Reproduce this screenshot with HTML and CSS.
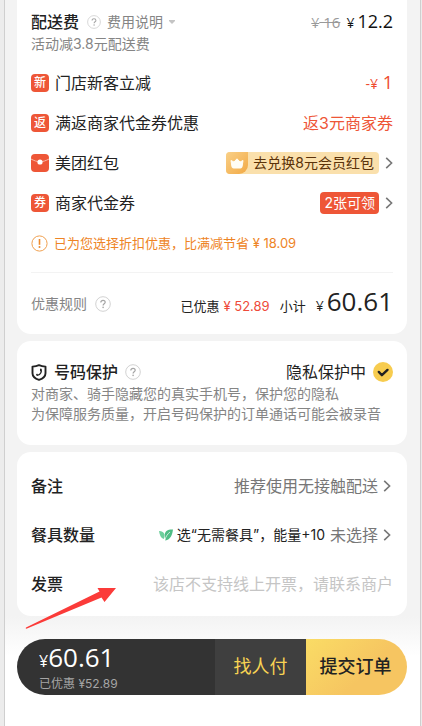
FILE: index.html
```html
<!DOCTYPE html>
<html lang="zh-CN">
<head>
<meta charset="utf-8">
<meta name="viewport" content="width=device-width, initial-scale=1">
<title>提交订单</title>
<link rel="stylesheet" href="styles.css">
</head>
<body>
<svg class="defs" aria-hidden="true">
  <symbol id="chevron" viewBox="0 0 8 14"><path d="M1.2 1.8 6.6 7l-5.4 5.2" fill="none" stroke="currentColor" stroke-width="1.6"/></symbol>
  <symbol id="help" viewBox="0 0 16 16"><circle cx="8" cy="8" r="7.3" fill="none" stroke="#d2d2d2"/><path d="M5.8 6.4C5.8 5 6.700 4.300 8 4.300s2.200.8 2.200 1.900c0 1.500-2.100 1.600-2.100 3.200" fill="none" stroke="#a5a5a5" stroke-width="1.200"/><circle cx="8.100" cy="11.400" r=".8" fill="#a5a5a5"/></symbol>
</svg>
<div class="phone">
  <main class="content">
    <section class="card fees">
      <div class="row fee-row">
        <div class="side"><span class="title">配送费</span>
          <button class="hint" type="button"><svg class="help help-small" aria-hidden="true"><use href="#help"/></svg>费用说明<svg class="caret" viewBox="0 0 6 4" aria-hidden="true"><path d="M0 0h6v1L3 4 0 1z" fill="#c4c4c4"/></svg></button>
        </div>
        <div class="price"><del><small>¥</small> 16</del><span class="now"><small>¥</small>12.2</span></div>
      </div>
      <p class="note">活动减3.8元配送费</p>
      <div class="row offer">
        <div class="side"><span class="badge">新</span><span>门店新客立减</span></div>
        <span class="minus"><small>-¥</small> 1</span>
      </div>
      <div class="row offer">
        <div class="side"><span class="badge">返</span><span>满返商家代金券优惠</span></div>
        <span class="red">返3元商家券</span>
      </div>
      <div class="row offer">
        <div class="side"><svg class="packet" viewBox="0 0 18 18" aria-hidden="true"><rect width="18" height="18" rx="4" fill="#ee5637"/><path d="M0 5c3 1.700 6 2.700 9 2.700S15 6.700 18 5" fill="none" stroke="#f8b9a8" stroke-width="1"/><circle cx="9" cy="8" r="2.600" fill="#fff"/></svg><span>美团红包</span></div>
        <button class="link" type="button"><span class="vip"><span class="crown"><svg viewBox="0 0 14 11" aria-hidden="true"><path d="M1 2.500 4 4 7 .8 10 4l3-1.500-.9 6Q12 10 10.500 10h-7Q2 10 1.900 8.500z" fill="#fffdf5" stroke="#fffdf5" stroke-width="1" stroke-linejoin="round"/></svg></span><span class="vip-text">去兑换8元会员红包</span></span><svg class="chevron" aria-hidden="true"><use href="#chevron"/></svg></button>
      </div>
      <div class="row offer">
        <div class="side"><span class="badge">券</span><span>商家代金券</span></div>
        <button class="link" type="button"><span class="tag">2张可领</span><svg class="chevron" aria-hidden="true"><use href="#chevron"/></svg></button>
      </div>
      <p class="notice"><svg viewBox="0 0 17 17" aria-hidden="true"><circle cx="8.500" cy="8.500" r="7.600" fill="none" stroke="#f0a050"/><path d="M8.500 4v5.800" stroke="#ee8a2c" stroke-width="1.600"/><circle cx="8.500" cy="12" r="1" fill="#ee8a2c"/></svg><span>已为您选择折扣优惠，比满减节省 ¥ 18.09</span></p>
      <div class="row summary">
        <button class="hint rules" type="button">优惠规则<svg class="help" aria-hidden="true"><use href="#help"/></svg></button>
        <div class="totals"><span>已优惠<span class="saved">¥ 52.89</span></span><span>小计</span><span class="total"><small>¥</small>60.61</span></div>
      </div>
    </section>

    <section class="card privacy">
      <div class="row privacy-row">
        <div class="side"><svg class="shield" viewBox="0 0 16 17" aria-hidden="true"><path d="M8 1.200C6 2.100 4 2.500 1.500 2.600v6.600c0 3.400 2.700 5.400 6.500 6.600 3.800-1.200 6.500-3.200 6.500-6.600V2.600C12 2.500 10 2.100 8 1.200z" fill="none" stroke="#222" stroke-width="1.900" stroke-linejoin="round"/><path d="M9.700 4.800c1.400 2.600.3 5.800-3.500 6.500" fill="none" stroke="#222" stroke-width="1.300"/><path d="M9 4.600l1.700 1-.7 1.700-1-.3zM5 10l1.500-.2.500 1.700-1.300.5z" fill="#222"/></svg><span class="title">号码保护</span><button class="hint" type="button" aria-label="号码保护说明"><svg class="help" aria-hidden="true"><use href="#help"/></svg></button></div>
        <label class="protect" for="protect"><span>隐私保护中</span><span class="check"><input id="protect" type="checkbox" checked><svg viewBox="0 0 20 20" aria-hidden="true"><path d="m5.800 9.900 3.100 3.300 5.600-5.300" fill="none" stroke="#222" stroke-width="2.400" stroke-linecap="round" stroke-linejoin="round"/></svg></span></label>
      </div>
      <p class="note">对商家、骑手隐藏您的真实手机号，保护您的隐私<br>为保障服务质量，开启号码保护的订单通话可能会被录音</p>
    </section>

    <section class="card options">
      <div class="row option"><span class="title">备注</span><button class="link muted" type="button">推荐使用无接触配送<svg class="chevron" aria-hidden="true"><use href="#chevron"/></svg></button></div>
      <div class="row option"><span class="title">餐具数量</span>
        <button class="link muted" type="button"><span class="eco"><svg viewBox="0 0 14 12" aria-hidden="true"><path d="M0 2c3 .1 5 1.300 5.400 3.500.2 1.500-.2 3.300-.6 4.500C1.800 9 .6 6 0 2z" fill="#6ecf9c"/><path d="M14 .5C9 .2 6 2 5.700 5.500c-.1 2 .2 4 .6 6C11.500 10.500 13.200 6 14 .5z" fill="#4fbd85"/><path d="M5.900 11C6.800 7.500 8.500 5 11 3" fill="none" stroke="#fff" stroke-width=".7"/></svg>选“无需餐具”，能量+10</span>未选择<svg class="chevron" aria-hidden="true"><use href="#chevron"/></svg></button></div>
      <div class="row option"><span class="title">发票</span><span class="disabled">该店不支持线上开票，请联系商户</span></div>
      <svg class="arrow" viewBox="0 0 92 42" aria-hidden="true"><path d="M91 1 72.500 1l2 3.500L1 40.500Q0 42 2 41.500L76.500 10.500l3 4.500z" fill="#fb3b39"/></svg>
    </section>
  </main>

  <footer class="footer">
    <div class="bar">
      <div class="amount"><div class="sum"><small>¥</small>60.61</div><div class="off">已优惠 ¥52.89</div></div>
      <button class="pay-other" type="button">找人付</button>
      <button class="submit" type="button">提交订单</button>
    </div>
  </footer>
</div>
</body>
</html>
```
FILE: styles.css
```css
* { box-sizing: border-box; }

body {
  margin: 0;
  background: #ececec;
  color: #222;
  font: 16px/24px Inter, "Noto Sans CJK SC", sans-serif;
}

p { margin: 0; }

button {
  padding: 0;
  border: 0;
  background: none;
  color: inherit;
  font: inherit;
  cursor: pointer;
}

svg { display: block; flex: none; }

.defs { position: absolute; width: 0; height: 0; }

.phone {
  display: flex;
  flex-direction: column;
  min-height: 100vh;
  margin: 0 1px 0 4px;
  border: solid #cfcfcf;
  border-width: 0 1px;
  background: #fff;
}

.content {
  display: flex;
  flex-direction: column;
  gap: 7px;
  padding: 0 13px 0 12px;
  background: #f3f3f3;
}

.card {
  position: relative;
  padding: 0 14px;
  border-radius: 14px;
  background: #fff;
}

.row {
  display: flex;
  align-items: center;
  justify-content: space-between;
  white-space: nowrap;
}

.side { display: flex; align-items: center; gap: 6px; }

.title { font-weight: 500; }

.note {
  color: #858585;
  font-size: 14px;
  line-height: 20px;
}

.hint {
  display: flex;
  align-items: center;
  gap: 6px;
  color: #858585;
  font-size: 14px;
}

.help { width: 16px; height: 16px; }
.help-small { width: 14px; height: 14px; }
.caret { width: 6px; height: 4px; }
.chevron { width: 8px; height: 14px; color: #777; }

/* Fees and discounts */
.fees { padding-top: 10px; border-radius: 0 0 14px 14px; }
.fees .note { margin-bottom: 9px; }
.fee-row { height: 24px; }
.fee-row .hint { margin-left: 2px; }

.price {
  display: flex;
  align-items: baseline;
  gap: 6px;
  font-family: "Open Sans", sans-serif;
}

.price del { color: #999; font: 500 15px "Open Sans", sans-serif; }
.price small { font-size: 14px; }
.now { color: #111; font-size: 18px; font-weight: 500; }
.now small { margin-right: 3px; }

.offer { height: 40px; }

.badge {
  width: 18px;
  height: 18px;
  border-radius: 4px;
  background: #ee5637;
  color: #fff;
  font-size: 12px;
  font-weight: 500;
  line-height: 18px;
  text-align: center;
}

.packet { width: 18px; height: 18px; }

.red { color: #ee5637; }
.minus { color: #ee4a2c; font: 500 18px/24px "Open Sans", sans-serif; }
.minus small { font-size: 14px; }

.link { display: flex; align-items: center; gap: 6px; }

.vip {
  display: flex;
  align-items: center;
  height: 22px;
  border-radius: 4px;
  overflow: hidden;
  background: #fae0ac;
  color: #5b3209;
  font-size: 14px;
}

.vip-text { padding: 0 5px; }

.crown {
  display: grid;
  place-items: center;
  width: 22px;
  height: 22px;
  border-radius: 0 0 9px 0;
  background: linear-gradient(135deg, #f9d088, #f2a944);
}

.crown svg { width: 14px; height: 11px; }

.tag {
  padding: 0 4px;
  border-radius: 4px;
  background: #ee5637;
  color: #fff;
  font-size: 14px;
  line-height: 22px;
}

.notice {
  display: flex;
  align-items: center;
  gap: 6px;
  height: 40px;
  color: #ee8425;
  font-size: 13px;
}

.notice svg { width: 17px; height: 17px; }

.summary {
  height: 62px;
  margin-top: 9px;
  border-top: 1px solid #f3f3f3;
}

.rules { gap: 8px; }

.totals {
  display: flex;
  align-items: baseline;
  gap: 10px;
  font-size: 13px;
}

.saved { margin-left: 4px; color: #ee4a3a; }
.total { font: 500 26px/32px "Open Sans", sans-serif; }
.total small { margin-right: 3px; font-size: 14px; }

/* Number protection */
.privacy { padding-top: 19px; padding-bottom: 21px; }
.privacy .side { gap: 7px; }
.shield { width: 16px; height: 17px; }
.protect { display: flex; align-items: center; gap: 7px; }
.check { display: grid; width: 20px; height: 20px; }
.check input, .check svg { grid-area: 1 / 1; width: 20px; height: 20px; margin: 0; }
.check input { appearance: none; border-radius: 50%; background: #f7cc4f; }
.check svg { pointer-events: none; z-index: 1; }

/* Order options */
.options { padding-top: 9px; padding-bottom: 8px; }
.option { height: 49px; }
.muted { color: #777; }
.option .link { gap: 5px; padding-right: 2px; }

.eco {
  display: flex;
  align-items: center;
  gap: 4px;
  color: #222;
  font-size: 14px;
}

.eco svg { width: 14px; height: 12px; }
.disabled { color: #c5c5c5; }

.arrow {
  position: absolute;
  bottom: -13px;
  left: 8px;
  z-index: 1;
  width: 92px;
  height: 42px;
}

/* Payment bar */
.footer {
  flex: 1;
  padding: 23px 13px 31px 12px;
  background: linear-gradient(#f3f3f3, #fff 40px);
}

.bar {
  display: flex;
  height: 56px;
  border-radius: 28px;
  overflow: hidden;
}

.amount { flex: 1; padding: 3px 0 0 22px; background: #333; color: #fff; }
.sum { font: 500 26px/30px "Open Sans", sans-serif; }
.sum small { font-size: 16px; }
.off { color: #a5a5a5; font-size: 12px; line-height: 16px; }

.pay-other {
  width: 91px;
  background: #3f3f3f;
  color: #f8d353;
  font-size: 18px;
}

.submit {
  width: 101px;
  padding-right: 2px;
  background: linear-gradient(135deg, #fadc65, #f6c561 60%);
  color: #222;
  font-size: 18px;
  font-weight: 500;
}
```
